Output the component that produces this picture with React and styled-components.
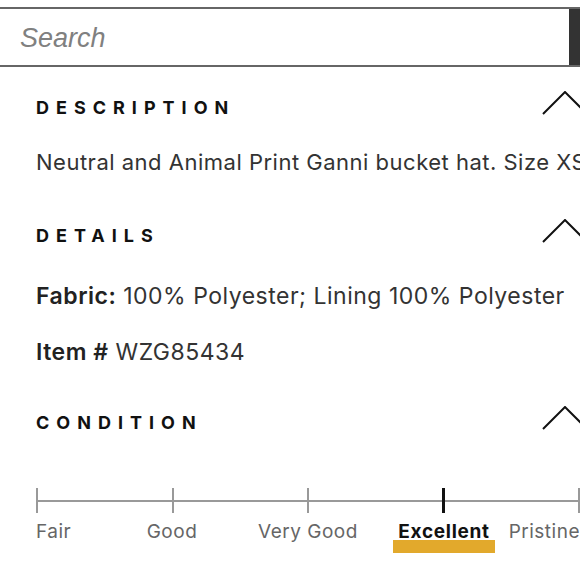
import styled, { createGlobalStyle } from "styled-components";

const GlobalStyle = createGlobalStyle`
  body {
    margin: 0;
    background: #fff;
    overflow: hidden;
    font-family: Inter, "Liberation Sans", sans-serif;
    color: #222;
  }
`;

const Page = styled.div`
  width: 640px;
  padding-top: 7px;
`;

const SearchBar = styled.form`
  display: flex;
  height: 56px;
  border-top: 2px solid #666;
  border-bottom: 2px solid #666;
`;

const SearchInput = styled.input`
  width: 569px;
  border: none;
  outline: none;
  padding: 3px 0 0 20px;
  box-sizing: border-box;
  font-family: "Liberation Sans", Arial, sans-serif;
  font-style: italic;
  font-size: 27px;
  color: #333;

  &::placeholder {
    color: #808080;
  }
`;

const SearchBtn = styled.button`
  flex: 1;
  border: none;
  background-color: #333;
`;

const Content = styled.div`
  width: 552px;
  padding-left: 36px;
`;

const SectionHeader = styled.div`
  display: flex;
  justify-content: space-between;
  align-items: center;
  margin-top: ${(p) => p.$top}px;
  height: 24px;
`;

const Title = styled.h2`
  margin: 0;
  font-size: 18px;
  line-height: 24px;
  font-weight: 700;
  letter-spacing: 7px;
  color: #111;
`;

const Chevron = styled.svg`
  margin-bottom: 11px;
  flex-shrink: 0;
`;

const Text = styled.p`
  margin: ${(p) => p.$top}px 0 0;
  font-size: ${(p) => p.$size || 23}px;
  line-height: 28px;
  letter-spacing: 0.5px;
  color: #333;
  white-space: nowrap;

  b {
    font-weight: 600;
    color: #222;
  }
`;

const Scale = styled.div`
  width: 544px;
  margin-top: 53px;
`;

const Track = styled.div`
  display: flex;
  height: 25px;
  background: linear-gradient(#999, #999) 0 12px / 100% 2px no-repeat;
`;

const Segment = styled.div`
  flex: 1;
  border-left: 2px solid #999;

  &:last-child {
    flex: 0;
  }
`;

const ActiveTick = styled.div`
  flex: 1;
  border-left: 3px solid #111;
  margin-left: -1px;
`;

const Labels = styled.div`
  display: grid;
  grid-template-columns: repeat(8, 68px);
  align-items: start;
  margin-top: 9px;
`;

const Label = styled.div`
  grid-column: ${(p) => p.$col};
  justify-self: ${(p) => p.$align || "center"};
  font-size: 19px;
  line-height: 20px;
  letter-spacing: 0.5px;
  white-space: nowrap;
  color: #666;
`;

const ActiveLabel = styled(Label)`
  color: #111;
  font-weight: 700;
  letter-spacing: 0.7px;
  padding: 0 5px 11px;
  background: linear-gradient(
    transparent 18px,
    #e2a92c 18px,
    #e2a92c 31px,
    transparent 31px
  );
`;

function ChevronUp() {
  return (
    <Chevron width="46" height="24" viewBox="0 0 46 24">
      <path d="M1 23 L23 1 L45 23" fill="none" stroke="#111" strokeWidth="2" />
    </Chevron>
  );
}

function Section({ title, top }) {
  return (
    <SectionHeader $top={top}>
      <Title>{title}</Title>
      <ChevronUp />
    </SectionHeader>
  );
}

export default function App() {
  return (
    <>
      <GlobalStyle />
      <Page>
        <SearchBar onSubmit={(e) => e.preventDefault()}>
          <SearchInput placeholder="Search" />
          <SearchBtn type="submit" aria-label="Search" />
        </SearchBar>
        <Content>
          <Section title="DESCRIPTION" top={29} />
          <Text $top={28} $size={22}>
            Neutral and Animal Print Ganni bucket hat. Size XS
          </Text>

          <Section title="DETAILS" top={48} />
          <Text $top={34}>
            <b>Fabric:</b> 100% Polyester; Lining 100% Polyester
          </Text>
          <Text $top={28}>
            <b>Item #</b> WZG85434
          </Text>

          <Section title="CONDITION" top={45} />
          <Scale>
            <Track>
              <Segment />
              <Segment />
              <Segment />
              <ActiveTick />
              <Segment />
            </Track>
            <Labels>
              <Label $col="1" $align="start">Fair</Label>
              <Label $col="2 / 4">Good</Label>
              <Label $col="4 / 6">Very Good</Label>
              <ActiveLabel $col="6 / 8">Excellent</ActiveLabel>
              <Label $col="8" $align="end">Pristine</Label>
            </Labels>
          </Scale>
        </Content>
      </Page>
    </>
  );
}
